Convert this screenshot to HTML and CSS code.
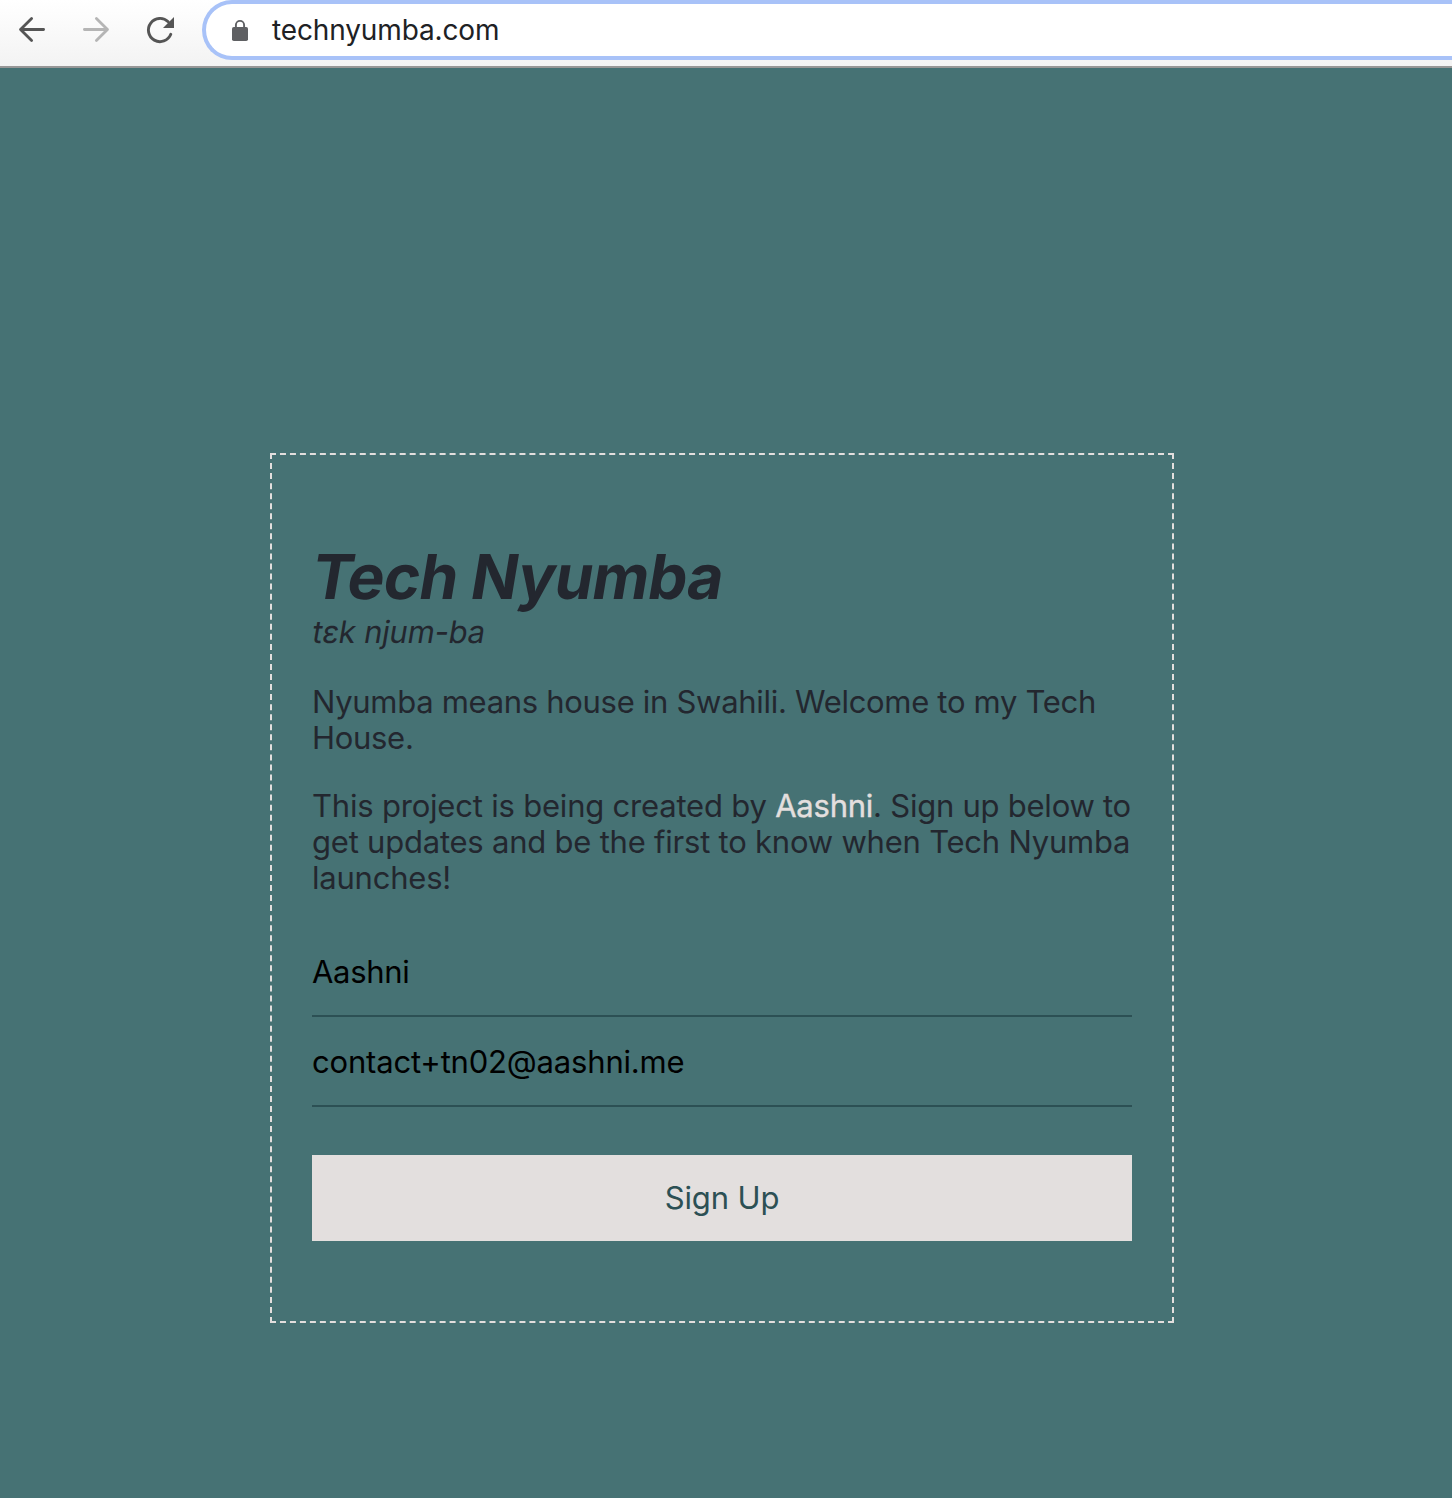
FILE: index.html
```html
<!DOCTYPE html>
<html lang="en">
<head>
<meta charset="utf-8">
<title>Tech Nyumba</title>
<link rel="stylesheet" href="styles.css">
</head>
<body>
<header class="toolbar">
  <svg class="icon" width="32" height="32" viewBox="0 0 32 32" fill="none" stroke="#555" stroke-width="2.8" stroke-linecap="round" stroke-linejoin="round"><path d="M27.600 15.500H4.600M15.600 4.400 4.500 15.500 15.600 26.600"/></svg>
  <svg class="icon" width="32" height="32" viewBox="0 0 32 32" fill="none" stroke="#b5b5b5" stroke-width="2.8" stroke-linecap="round" stroke-linejoin="round"><path d="M4.400 15.500H27.400M16.400 4.400 27.500 15.500 16.400 26.600"/></svg>
  <svg class="icon" width="32" height="32" viewBox="0 0 32 32"><path d="M26.800 20.300A11.600 11.600 0 1 1 24.200 7.800" fill="none" stroke="#555" stroke-width="2.900" stroke-linecap="round"/><path d="M30 3V14H19z" fill="#555"/></svg>
  <div class="address">
    <svg class="lock" width="16" height="22" viewBox="0 -0.8 16 22"><path d="M3.900 8V5.200a4.100 4.100 0 0 1 8.200 0V8" fill="none" stroke="#5f6063" stroke-width="1.900"/><rect y="7.200" width="16" height="14" rx="1.800" fill="#5f6063"/></svg>
    <span class="url">technyumba.com</span>
  </div>
</header>
<main class="page">
  <section class="card">
    <h1 class="title">Tech Nyumba</h1>
    <p class="phonetic">tɛk njum-ba</p>
    <p class="text intro">Nyumba means house in Swahili. Welcome to my Tech<br>House.</p>
    <p class="text">This project is being created by <a class="link">Aashni</a><span class="after-link">. Sign up below to</span><br><span class="wide">get updates and be the first to know when Tech Nyumba</span><br><span class="wide">launches!</span></p>
    <form class="form">
      <div class="field name">Aashni</div>
      <div class="field">contact+tn02@aashni.me</div>
      <button class="submit" type="button">Sign Up</button>
    </form>
  </section>
</main>
</body>
</html>
```
FILE: styles.css
```css
* { box-sizing: border-box; }
body {
  margin: 0;
  height: 1498px;
  display: flex;
  flex-direction: column;
  overflow: hidden;
  background: #467274;
  color: #23272f;
  font-family: Inter, "Liberation Sans", sans-serif;
}
.toolbar {
  flex: none;
  height: 68px;
  display: flex;
  align-items: flex-start;
  gap: 32px;
  padding-left: 16px;
  background: linear-gradient(#fff, #f3f3f3);
  border-bottom: 2px solid #979797;
}
.icon { flex: none; margin-top: 14px; }
.address {
  flex: 1;
  height: 60px;
  margin-left: -6px;
  display: flex;
  align-items: center;
  padding-left: 26px;
  background: #fff;
  border: 4px solid #a8c2f8;
  border-right: 0;
  border-radius: 30px 0 0 30px;
}
.lock { flex: none; margin-right: 24px; }
.url { font-size: 28px; line-height: 36px; letter-spacing: -0.13px; color: #202124; }
.page { flex: 1; padding: 385px 278px 0 270px; }
.card {
  height: 870px;
  padding: 87px 40px 0;
  border: 2px dashed #e3dfde;
}
/* Slanted roman letterforms, so the "a" keeps its two storeys */
.title, .phonetic {
  width: max-content;
  transform: skewX(-9.5deg);
  transform-origin: 0 80%;
}
.title { margin: 0 0 0 -3px; font-size: 62px; line-height: 70px; padding-bottom: 2px; font-weight: 700; letter-spacing: -0.8px; }
.phonetic { margin: 0 0 34px -1px; font-size: 31px; line-height: 36px; letter-spacing: -0.2px; }
.text { margin: 0 0 32px; font-size: 31px; line-height: 36px; letter-spacing: -0.2px; white-space: nowrap; }
.intro { letter-spacing: -0.3px; }
.link { color: #e3dfde; letter-spacing: -0.24px; -webkit-text-stroke: 0.4px #e3dfde; }
.after-link { letter-spacing: -0.24px; }
.wide { letter-spacing: -0.22px; }
.form { margin-top: -1px; }
.field {
  height: 90px;
  padding-top: 26px;
  font-size: 31px;
  line-height: 38px;
  letter-spacing: -0.18px;
  color: #000;
  border-bottom: 2px solid #2c5054;
}
.name { letter-spacing: -0.3px; }
.submit {
  display: block;
  width: 100%;
  height: 86px;
  margin-top: 48px;
  padding: 0;
  border: 0;
  background: #e3dfde;
  color: #2c5054;
  font: 31px/38px Inter, "Liberation Sans", sans-serif;
  letter-spacing: -0.13px;
}
```
